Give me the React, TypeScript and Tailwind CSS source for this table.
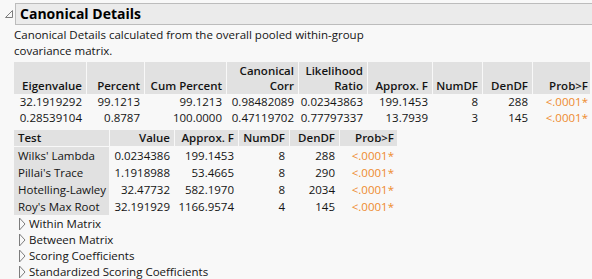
import React from "react";

const ORANGE = "text-[#ee8a2e]";

function Tri() {
  return (
    <svg width="8" height="14" viewBox="0 0 8 14" className="shrink-0">
      <path d="M1.5 1 L7 7 L1.5 13 Z" fill="none" stroke="#7d7d7d" strokeWidth="1" />
    </svg>
  );
}

const t1Head = [
  ["", "Eigenvalue"],
  ["", "Percent"],
  ["", "Cum Percent"],
  ["Canonical", "Corr"],
  ["Likelihood", "Ratio"],
  ["", "Approx. F"],
  ["", "NumDF"],
  ["", "DenDF"],
  ["", "Prob>F"],
];

const t1Rows = [
  ["32.1919292", "99.1213", "99.1213", "0.98482089", "0.02343863", "199.1453", "8", "288", "<.0001*"],
  ["0.28539104", "0.8787", "100.0000", "0.47119702", "0.77797337", "13.7939", "3", "145", "<.0001*"],
];

const t2Rows = [
  ["Wilks' Lambda", "0.0234386", "199.1453", "8", "288", "<.0001*"],
  ["Pillai's Trace", "1.1918988", "53.4665", "8", "290", "<.0001*"],
  ["Hotelling-Lawley", "32.47732", "582.1970", "8", "2034", "<.0001*"],
  ["Roy's Max Root", "32.191929", "1166.9574", "4", "145", "<.0001*"],
];

export default function App() {
  return (
    <div
      className="w-[592px] h-[279px] overflow-hidden bg-[#f8f8f8] text-[#141414] text-[11.5px] leading-[16px] whitespace-nowrap"
      style={{ fontFamily: '"Open Sans", "Noto Sans", sans-serif' }}
    >
      {/* Title */}
      <div className="flex items-start pt-[3px]">
        <div className="w-[15px] h-[22px] flex items-start pt-[7px] pl-[5px]">
          <svg width="8" height="8" viewBox="0 0 8 8">
            <path d="M7.5 0.5 L7.5 7.5 L0.5 7.5 Z" fill="none" stroke="#7d7d7d" strokeWidth="1" />
          </svg>
        </div>
        <div className="flex-1 h-[22px] bg-[#ebebeb] border-y border-l border-[#bcbcbc] pl-[4px] flex items-center">
          <span className="font-bold text-[14px] leading-[20px] text-black">Canonical Details</span>
        </div>
      </div>

      {/* Description */}
      <div className="pl-[14px] pt-[2px] leading-[16px]">
        Canonical Details calculated from the overall pooled within-group
        <br />
        covariance matrix.
      </div>

      {/* Table 1 */}
      <div className="pl-[14px] pt-[3px]">
        <div className="grid grid-cols-[72px_57px_81px_71px_68px_64px_49px_49px_57px] gap-x-px">
          {t1Head.map(([a, b], i) => (
            <div
              key={i}
              className={`bg-[#e1e1e1] h-[32px] ${i === 8 ? "pr-[2px]" : "pr-[4px]"} flex flex-col justify-end items-end font-semibold leading-[15px] pb-[1px]`}
            >
              {a && <span>{a}</span>}
              <span>{b}</span>
            </div>
          ))}
          {t1Rows.map((r, ri) =>
            r.map((c, ci) => (
              <div
                key={`${ri}-${ci}`}
                className={`h-[16px] text-right ${ci === 8 ? "pr-[2px] " + ORANGE : "pr-[4px]"}`}
              >
                {c}
              </div>
            ))
          )}
        </div>
      </div>

      {/* Table 2 */}
      <div className="pl-[14px] pt-[4px]">
        <div className="grid grid-cols-[95px_64px_63px_50px_49px_57px] gap-x-px w-max">
          {["Test", "Value", "Approx. F", "NumDF", "DenDF", "Prob>F"].map((h, i) => (
            <div
              key={h}
              className={`bg-[#e1e1e1] h-[16px] font-semibold ${i === 0 ? "pl-[4px] text-left" : i === 5 ? "pr-[3px] text-right" : "pr-[4px] text-right"}`}
            >
              {h}
            </div>
          ))}
          <div className="col-span-6 h-px" />
          {t2Rows.map((r, ri) =>
            r.map((c, ci) => (
              <div
                key={`${ri}-${ci}`}
                className={`h-[17px] leading-[17px] ${
                  ci === 0
                    ? "bg-[#e1e1e1] pl-[4px] text-left"
                    : ci === 5
                    ? "text-right pr-[3px] " + ORANGE
                    : "text-right pr-[4px]"
                }`}
              >
                {c}
              </div>
            ))
          )}
        </div>
      </div>

      {/* Collapsed outlines */}
      <div className="pl-[18px] pt-[1px]">
        {["Within Matrix", "Between Matrix", "Scoring Coefficients", "Standardized Scoring Coefficients"].map((t) => (
          <div key={t} className="flex items-center gap-[3px] h-[16px]">
            <Tri />
            <span>{t}</span>
          </div>
        ))}
      </div>
    </div>
  );
}
